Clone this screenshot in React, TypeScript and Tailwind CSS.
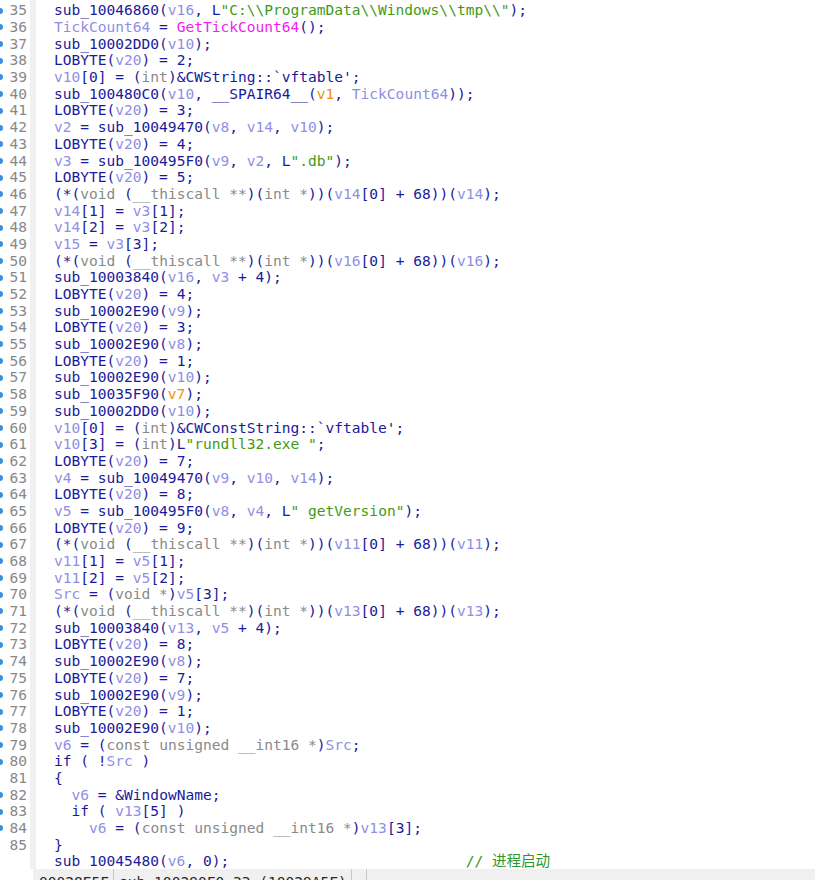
import React from "react";

const SRC = String.raw`sub_10046860(«l|v16», L«s|"C:\\ProgramData\\Windows\\tmp\\"»);
«l|TickCount64» = «m|GetTickCount64»();
sub_10002DD0(«l|v10»);
LOBYTE(«l|v20») = 2;
«l|v10»[0] = («g|int»)&CWString::§vftable';
sub_100480C0(«l|v10», __SPAIR64__(«o|v1», «l|TickCount64»));
LOBYTE(«l|v20») = 3;
«l|v2» = sub_10049470(«l|v8», «l|v14», «l|v10»);
LOBYTE(«l|v20») = 4;
«l|v3» = sub_100495F0(«l|v9», «l|v2», L«s|".db"»);
LOBYTE(«l|v20») = 5;
(*(«g|void» («g|__thiscall **»)(«g|int *»))(«l|v14»[0] + 68))(«l|v14»);
«l|v14»[1] = «l|v3»[1];
«l|v14»[2] = «l|v3»[2];
«l|v15» = «l|v3»[3];
(*(«g|void» («g|__thiscall **»)(«g|int *»))(«l|v16»[0] + 68))(«l|v16»);
sub_10003840(«l|v16», «l|v3» + 4);
LOBYTE(«l|v20») = 4;
sub_10002E90(«l|v9»);
LOBYTE(«l|v20») = 3;
sub_10002E90(«l|v8»);
LOBYTE(«l|v20») = 1;
sub_10002E90(«l|v10»);
sub_10035F90(«o|v7»);
sub_10002DD0(«l|v10»);
«l|v10»[0] = («g|int»)&CWConstString::§vftable';
«l|v10»[3] = («g|int»)L«s|"rundll32.exe "»;
LOBYTE(«l|v20») = 7;
«l|v4» = sub_10049470(«l|v9», «l|v10», «l|v14»);
LOBYTE(«l|v20») = 8;
«l|v5» = sub_100495F0(«l|v8», «l|v4», L«s|" getVersion"»);
LOBYTE(«l|v20») = 9;
(*(«g|void» («g|__thiscall **»)(«g|int *»))(«l|v11»[0] + 68))(«l|v11»);
«l|v11»[1] = «l|v5»[1];
«l|v11»[2] = «l|v5»[2];
«l|Src» = («g|void *»)«l|v5»[3];
(*(«g|void» («g|__thiscall **»)(«g|int *»))(«l|v13»[0] + 68))(«l|v13»);
sub_10003840(«l|v13», «l|v5» + 4);
LOBYTE(«l|v20») = 8;
sub_10002E90(«l|v8»);
LOBYTE(«l|v20») = 7;
sub_10002E90(«l|v9»);
LOBYTE(«l|v20») = 1;
sub_10002E90(«l|v10»);
«l|v6» = («g|const unsigned __int16 *»)«l|Src»;
if ( !«l|Src» )
{
  «l|v6» = &WindowName;
  if ( «l|v13»[5] )
    «l|v6» = («g|const unsigned __int16 *»)«l|v13»[3];
}
sub_10045480(«l|v6», 0);                           «c|// 进程启动»`;

const LINES = SRC.split("\n").map((l) => l.replace(/§/g, "`"));

const COLORS: Record<string, string> = {
  l: "text-[#8f8fe6]",
  g: "text-[#8a8a8a]",
  s: "text-[#3f9a18]",
  o: "text-[#f0900a]",
  m: "text-[#f01ef0]",
  c: "text-[#2e962e]",
};

function renderLine(line: string) {
  const parts: React.ReactNode[] = [];
  const re = /«([a-z])\|([^»]*)»/g;
  let last = 0;
  let m: RegExpExecArray | null;
  let k = 0;
  while ((m = re.exec(line)) !== null) {
    if (m.index > last) parts.push(<span key={k++}>{line.slice(last, m.index)}</span>);
    parts.push(
      <span key={k++} className={COLORS[m[1]]}>
        {m[2]}
      </span>
    );
    last = m.index + m[0].length;
  }
  if (last < line.length) parts.push(<span key={k++}>{line.slice(last)}</span>);
  return parts;
}

const MONO = "font-['DejaVu_Sans_Mono','Noto_Sans_CJK_SC',monospace] text-[14.55px]";

export default function App() {
  const rows = LINES.map((line, i) => {
    const num = 35 + i;
    const hasNum = num <= 85;
    const hasDot = hasNum && num !== 81 && num !== 85;
    return { line, num, hasNum, hasDot };
  });

  return (
    <div className={`w-[815px] h-[880px] overflow-hidden bg-white flex flex-col ${MONO}`}>
      <div className="h-[869px] overflow-hidden flex">
        <div className="w-[36px] flex shrink-0">
          <div className="w-[30px] pt-[2.35px] flex flex-col">
            {rows.map((r) => (
              <div key={r.num} className="h-[16.7px] leading-[16.7px] flex items-center justify-between pr-[3px] shrink-0">
                <div className={`w-[3px] h-[6px] rounded-r-full ${r.hasDot ? "bg-[#3b8de0]" : ""}`} />
                <span className="text-[#888888]">{r.hasNum ? r.num : ""}</span>
              </div>
            ))}
          </div>
          <div className="w-[6px] bg-[#f0f0f0]" />
        </div>
        <div className="flex-1 pl-[18px] pt-[2.35px] flex flex-col text-[#1a1a9a]">
          {rows.map((r) => (
            <div key={r.num} className="h-[16.7px] leading-[16.7px] whitespace-pre shrink-0">
              {renderLine(r.line)}
            </div>
          ))}
        </div>
      </div>
      <div className="h-[11px] ml-[33px] bg-[#f0f0f0] overflow-hidden flex items-start text-[#2a2a2a]">
        <span className="pl-[6px] pr-[4px] pt-[4px] leading-[17px] whitespace-pre">00028E5F</span>
        <div className="w-px h-full bg-[#c8c8c8]" />
        <span className="pl-[5px] pr-[4px] pt-[4px] leading-[17px] whitespace-pre">sub_100290F0:33 (10029A5F)</span>
        <div className="w-px h-full bg-[#c8c8c8]" />
        <div className="w-[14px]" />
        <div className="w-px h-full bg-[#c8c8c8]" />
      </div>
    </div>
  );
}
